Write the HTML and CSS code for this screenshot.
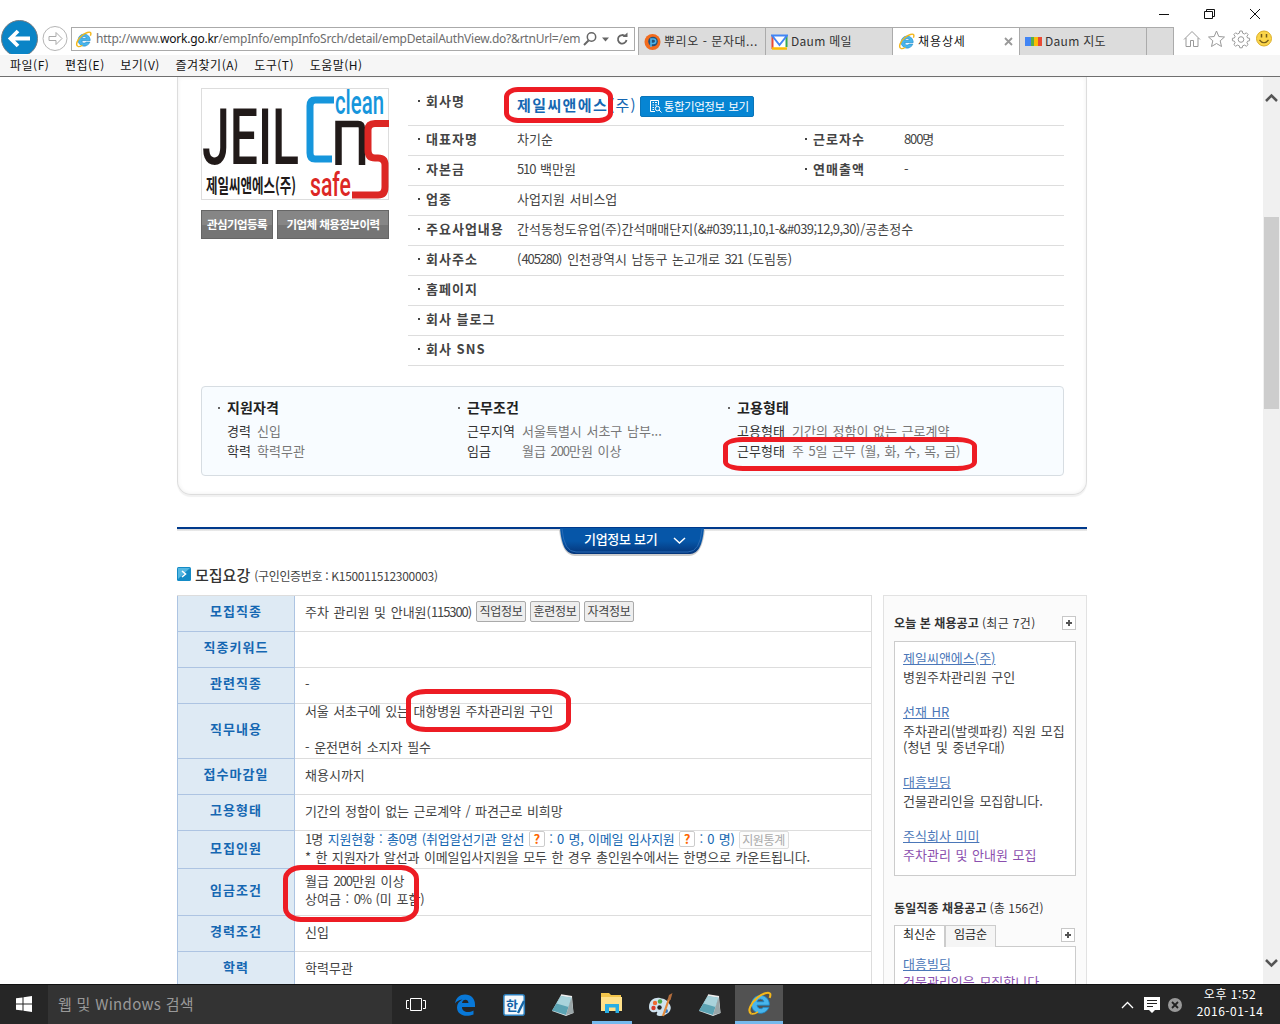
FILE: index.html
```html
<!DOCTYPE html>
<html lang="ko">
<head>
<meta charset="utf-8">
<title>채용상세</title>
<link rel="stylesheet" href="styles.css">
</head>
<body>
<svg class="defs" width="0" height="0" aria-hidden="true">
  <defs>
    <symbol id="ie" viewBox="0 0 24 24">
      <path d="M21 15.700A8.600 8.600 0 1 1 21.400 11.600V13.600H9.600A3.500 3.500 0 0 0 15.800 15.700ZM9.600 10.300H16.200A3.400 3.400 0 0 0 9.600 10.300Z" fill="#48b5ec" stroke="#1b86c6" stroke-width=".8" fill-rule="evenodd"/>
      <path d="M4.200 21.800C-.2 19.600 4 11 10 6.300 15 2.300 21 .3 22.200 2.600 22.700 3.600 22.400 5 21.700 6.600" fill="none" stroke="#f3b71b" stroke-width="2"/>
      <path d="M4.200 21.800C6 22.500 8.500 21.300 10.500 20" fill="none" stroke="#f3b71b" stroke-width="1.600"/>
    </symbol>
    <symbol id="notepad" viewBox="0 0 24 24">
      <path d="M10 2L21 3.500 22.500 20 15 23 1 18Z" fill="#dfe5e6"/>
      <path d="M10 3L20.500 4.500 15 22 1 17.500Z" fill="#5ba3b3"/>
      <path d="M10 3L20.500 4.500 17.500 14 5.500 10.500Z" fill="#a9d3db"/>
      <path d="M20.500 4.500L22.500 20 15 22Z" fill="#9aa6a8"/>
      <path d="M10 2L21 3.800" stroke="#eee" stroke-width="1.500"/>
    </symbol>
  </defs>
</svg>

<header class="chrome">
  <div class="titlebar">
    <svg width="110" height="12" viewBox="0 0 110 12" fill="none" stroke="#111"><path d="M5 6.500H15"/><path d="M50.500 3.500H58.500V10.500H50.500ZM52.500 3.500V1.500H60.500V8.500H58.500"/><path d="M96 1L106 11M106 1L96 11"/></svg>
  </div>
  <div class="navrow">
    <svg class="back" width="72" height="34" viewBox="0 0 72 34"><circle cx="19.500" cy="18.500" r="18" fill="#0a84c6" stroke="#737d84"/><path d="M30 18.500H11M18 11L10.500 18.500 18 26" fill="none" stroke="#fff" stroke-width="3.800"/><circle cx="55" cy="18.500" r="12" fill="#fff" stroke="#b5b5b5"/><path d="M49 16.500H56V12.500L62 18.500 56 24.500V20.500H49Z" fill="none" stroke="#aaa"/></svg>
    <div class="address">
      <svg width="17" height="17"><use href="#ie"/></svg>
      <span class="url">http://www.<b>work.go.kr</b>/empInfo/empInfoSrch/detail/empDetailAuthView.do?&amp;rtnUrl=/em</span>
      <svg class="addr-icons" width="48" height="18" viewBox="0 0 48 18" fill="none" stroke="#666"><circle cx="8.500" cy="7" r="4.200" stroke-width="1.500"/><path d="M5.500 10.500L1 15" stroke-width="2"/><path d="M19 7.500H26L22.500 11.500Z" fill="#666" stroke="none"/><path d="M42.500 6.500A4.300 4.300 0 1 0 43.500 10" stroke-width="1.800"/><path d="M39.500 7H44.500V2.500Z" fill="#666" stroke="none"/></svg>
    </div>
    <nav class="tabs">
      <div class="tab"><svg width="17" height="18" viewBox="0 0 17 18"><circle cx="8.500" cy="9" r="8" fill="#f26b1d"/><circle cx="9" cy="8.500" r="4.800" fill="#21527c"/><path d="M7 14V6H9.500A2 2 0 0 1 9.500 10.500H7" fill="none" stroke="#4fb4e8" stroke-width="1.600"/></svg><span class="t1">뿌리오 - 문자대...</span></div>
      <div class="tab"><svg width="17" height="16" viewBox="0 0 17 16"><path d="M1 1H16V15H1Z" fill="#fff"/><path d="M1.500 1V15" stroke="#e94a35" stroke-width="2"/><path d="M1 14.500H16" stroke="#fbbc05" stroke-width="2.500"/><path d="M15.500 1V13" stroke="#34a853" stroke-width="2"/><path d="M1 1.500H16L8.500 11Z" fill="#fff" stroke="#4285f4" stroke-width="2"/></svg><span class="t2">Daum 메일</span></div>
      <div class="tab active"><svg width="17" height="17"><use href="#ie"/></svg><span class="t3">채용상세</span><svg class="x" width="9" height="9" viewBox="0 0 9 9"><path d="M1 1L8 8M8 1L1 8" stroke="#999" stroke-width="1.800"/></svg></div>
      <div class="tab"><svg width="17" height="9" viewBox="0 0 17 9"><path d="M0 0H6V9H0Z" fill="#4285f4"/><path d="M6 0H9V9H6Z" fill="#5aaf46"/><path d="M9 0H13V9H9Z" fill="#fbbc05"/><path d="M13 0H17V9H13Z" fill="#e94a35"/></svg><span class="t2">Daum 지도</span></div>
      <div class="tab new"></div>
    </nav>
    <svg class="tools" width="92" height="20" viewBox="0 0 92 20" fill="none" stroke="#999"><path d="M2 10.500L10 2.500 18 10.500M4 9V17.500H8.500V11.500H11.500V17.500H16V9"/><path d="M34.500 2L36.800 7.500 42.500 8 38.200 11.800 39.500 17.500 34.500 14.500 29.500 17.500 30.800 11.800 26.500 8 32.200 7.500Z"/><path d="M57.800 2H60.200L60.700 4.200 62.500 5 64.400 3.800 66.100 5.500 64.900 7.400 65.600 9 67.600 9.300V11.700L65.600 12.200 64.900 13.700 66.100 15.600 64.400 17.200 62.500 16.100 60.700 16.800 60.200 18.800H57.800L57.300 16.800 55.500 16.100 53.600 17.200 51.900 15.600 53.100 13.700 52.400 12.200 50.400 11.700V9.300L52.400 9 53.100 7.400 51.900 5.500 53.600 3.800 55.500 5 57.300 4.200Z"/><circle cx="59" cy="10.500" r="2.800"/><circle cx="82" cy="9.500" r="7.500" fill="#fbd54a" stroke="#dcae28"/><path d="M79.500 5V8.500M84.500 5V8.500" stroke="#735a18" stroke-width="1.500"/><path d="M77.500 11Q82 16.500 86.500 11" stroke="#735a18" stroke-width="1.200"/></svg>
  </div>
  <nav class="menu"><span>파일(F)</span><span>편집(E)</span><span>보기(V)</span><span>즐겨찾기(A)</span><span>도구(T)</span><span>도움말(H)</span></nav>
</header>

<main class="viewport">
  <div class="page">
    <section class="card">
      <div class="company">
        <div class="brand">
          <svg class="logo" width="188" height="112" viewBox="0 0 188 112">
            <rect x=".5" y=".5" width="187" height="111" fill="#fff" stroke="#ddd"/>
            <text x="1" y="76" textLength="97" lengthAdjust="spacingAndGlyphs" class="l-jeil">JEIL</text>
            <text x="5" y="105" textLength="90" lengthAdjust="spacingAndGlyphs" class="l-kr">제일씨앤에스(주)</text>
            <path d="M133 12H114Q109 12 109 18V65Q109 71 114 71H131" fill="none" stroke="#1696dc" stroke-width="7"/>
            <path d="M137.500 77V36H157Q161 36 161 41V77" fill="none" stroke="#211a19" stroke-width="6.500"/>
            <path d="M188 35.500H174Q167 35.500 167 42V62Q167 70 174 70H177Q184 70 184 77V99Q184 107 177 107H151" fill="none" stroke="#dc2724" stroke-width="7"/>
            <text x="134" y="26" textLength="49" lengthAdjust="spacingAndGlyphs" class="l-en" fill="#1696dc">clean</text>
            <text x="109" y="108" textLength="41" lengthAdjust="spacingAndGlyphs" class="l-en" fill="#dc2724">safe</text>
          </svg>
          <div class="brand-btns"><a class="b1">관심기업등록</a><a class="b2">기업체 채용정보이력</a></div>
        </div>
        <dl class="info">
          <div class="first"><dt>회사명</dt><dd><strong>제일씨앤에스</strong><span class="ju">(주)</span><a class="bluebtn"><svg width="13" height="13" viewBox="0 0 13 13" fill="none" stroke="#fff"><path d="M6 11.500H1.500V.5H9.500V5M3.500 2.500H5M6 2.500H8M3.500 5H5M6 5H8M3.500 7.500H5M3.500 9.500H5"/><circle cx="8.500" cy="8.500" r="2.200"/><path d="M10 10L12.500 12.500"/></svg><span>통합기업정보 보기</span></a></dd></div>
          <div><dt>대표자명</dt><dd>차기순</dd><dt>근로자수</dt><dd class="side n">800명</dd></div>
          <div><dt>자본금</dt><dd><i class="n">510</i> 백만원</dd><dt>연매출액</dt><dd class="side">-</dd></div>
          <div><dt>업종</dt><dd>사업지원 서비스업</dd></div>
          <div><dt>주요사업내용</dt><dd>간석동청도유업(주)간석매매단지(<i class="codes">&amp;#039;11,10,1-&amp;#039;12,9,30</i>)/공촌정수</dd></div>
          <div><dt>회사주소</dt><dd>(<i class="n">405280</i>) 인천광역시 남동구 논고개로 <i class="n">321</i> (도림동)</dd></div>
          <div><dt>홈페이지</dt><dd></dd></div>
          <div><dt>회사 블로그</dt><dd></dd></div>
          <div><dt>회사 SNS</dt><dd></dd></div>
        </dl>
      </div>
      <div class="summary">
        <div class="s1"><h3>지원자격</h3><p><b>경력</b><span>신입</span></p><p><b>학력</b><span>학력무관</span></p></div>
        <div class="s2"><h3>근무조건</h3><p><b>근무지역</b><span>서울특별시 서초구 남부...</span></p><p><b>임금</b><span>월급 <i class="n">200</i>만원 이상</span></p></div>
        <div class="s3"><h3>고용형태</h3><p><b>고용형태</b><span>기간의 정함이 없는 근로계약</span></p><p><b>근무형태</b><span class="days">주 5일 근무 (월, 화, 수, 목, 금)</span></p></div>
      </div>
    </section>

    <div class="divider"><a><svg class="shape" width="146" height="30" viewBox="0 0 146 30"><defs><linearGradient id="g" x2="0" y2="1"><stop offset=".5" stop-color="#0656a8"/><stop offset="1" stop-color="#053579"/></linearGradient></defs><path d="M0 2H146Q143 28 130 28H16Q3 28 0 2Z" fill="#ccc"/><path d="M1 0H145Q143 26 131 26H15Q3 26 1 0Z" fill="url(#g)"/><path d="M3 1Q5 24 17 24H129Q141 24 143 1" fill="none" stroke="#2a6bb5"/><path d="M115 10L120.500 15 126 10" fill="none" stroke="#fff" stroke-width="1.500"/></svg><span>기업정보 보기</span></a></div>

    <h2><svg width="14" height="14" viewBox="0 0 14 14"><rect width="14" height="14" rx="1.500" fill="#148bc6"/><path d="M1 1H13L1 12Z" fill="#54b7e2"/><path d="M5 4L8.500 7 5 10" fill="none" stroke="#fff" stroke-width="1.600"/></svg><b>모집요강</b><span>(구인인증번호 : K150011512300003)</span></h2>

    <div class="columns">
      <dl class="detail">
        <div class="h36"><dt>모집직종</dt><dd><p>주차 관리원 및 안내원(<i class="n">115300</i>)<a class="mini">직업정보</a><a class="mini">훈련정보</a><a class="mini">자격정보</a></p></dd></div>
        <div class="h36"><dt>직종키워드</dt><dd></dd></div>
        <div class="h36"><dt>관련직종</dt><dd><p>-</p></dd></div>
        <div class="h55"><dt>직무내용</dt><dd><p class="duty">서울 서초구에 있는 대항병원 주차관리원 구인</p><p>&nbsp;</p><p>- 운전면허 소지자 필수</p></dd></div>
        <div class="h36"><dt>접수마감일</dt><dd><p>채용시까지</p></dd></div>
        <div class="h36"><dt>고용형태</dt><dd><p class="duty">기간의 정함이 없는 근로계약 / 파견근로 비희망</p></dd></div>
        <div class="h38"><dt>모집인원</dt><dd><p class="apply"><i class="n">1</i>명 <em>지원현황 : 총0명 (취업알선기관 알선 <u>?</u> : 0 명, 이메일 입사지원 <u>?</u> : 0 명)</em><a class="mini dim">지원통계</a></p><p class="note">* 한 지원자가 알선과 이메일입사지원을 모두 한 경우 총인원수에서는 한명으로 카운트됩니다.</p></dd></div>
        <div class="h47"><dt>임금조건</dt><dd><p>월급 <i class="n">200</i>만원 이상</p><p>상여금 : <i class="n">0%</i> (미 포함)</p></dd></div>
        <div class="h36"><dt>경력조건</dt><dd><p>신입</p></dd></div>
        <div class="h36"><dt>학력</dt><dd><p>학력무관</p></dd></div>
      </dl>
      <aside>
        <h4><b>오늘 본 채용공고</b><span>(최근 7건)</span><svg class="plus" width="14" height="14" viewBox="0 0 14 14"><rect x=".5" y=".5" width="13" height="13" fill="#fff" stroke="#c8c8c8"/><path d="M4 7H10M7 4V10" stroke="#555" stroke-width="2"/></svg></h4>
        <ul class="recent">
          <li><a>제일씨앤에스(주)</a><p>병원주차관리원 구인</p></li>
          <li><a>선재 HR</a><p>주차관리(발렛파킹) 직원 모집<br>(청년 및 중년우대)</p></li>
          <li><a>대흥빌딩</a><p>건물관리인을 모집합니다.</p></li>
          <li><a>주식회사 미미</a><p class="seen">주차관리 및 안내원 모집</p></li>
        </ul>
        <h4 class="same"><b>동일직종 채용공고</b><span>(총 156건)</span></h4>
        <div class="sort"><span class="on">최신순</span><span>임금순</span><svg class="plus" width="14" height="14" viewBox="0 0 14 14"><rect x=".5" y=".5" width="13" height="13" fill="#fff" stroke="#c8c8c8"/><path d="M4 7H10M7 4V10" stroke="#555" stroke-width="2"/></svg></div>
        <ul class="list2"><li><a>대흥빌딩</a><p class="seen">건물관리인을 모집합니다.</p></li></ul>
      </aside>
    </div>
    <i class="ring r1"></i><i class="ring r2"></i><i class="ring r3"></i><i class="ring r4"></i>
  </div>
  <div class="scrollbar">
    <svg width="17" height="12" viewBox="0 0 17 12"><path d="M3 9L8.500 3.500 14 9" fill="none" stroke="#555" stroke-width="2.500"/></svg>
    <div class="thumb"></div>
    <svg width="17" height="12" viewBox="0 0 17 12"><path d="M3 3L8.500 8.500 14 3" fill="none" stroke="#555" stroke-width="2.500"/></svg>
  </div>
</main>

<footer class="taskbar">
  <div class="start"><svg width="16" height="16" viewBox="0 0 16 16" fill="#fff"><path d="M0 2.300L6.500 1.400V7.500H0ZM7.500 1.200L16 0V7.500H7.500ZM0 8.500H6.500V14.600L0 13.700ZM7.500 8.500H16V16L7.500 14.800Z"/></svg></div>
  <div class="search">웹 및 Windows 검색</div>
  <div class="app"><svg width="20" height="14" viewBox="0 0 20 14" fill="none" stroke="#fff"><path d="M4.500 .5H15.500V12.500H4.500ZM3 2.500H.5V10.500H3M17 2.500H19.500V10.500H17"/></svg></div>
  <div class="app"><svg width="22" height="22" viewBox="0 0 22 22"><path d="M1 9.500C2 3.500 6 .5 11 .5 17 .5 21 4.500 21 10.500V13H8C8 18 14 19.500 19.500 16.500V20.500C11 24 3 20.500 3 13.500 3 10 5 7 8.500 5.500 4.500 6 2.500 7.500 1 9.500ZM8 9H14.500C14.500 4.500 8.500 4.500 8 9Z" fill="#0878d8" fill-rule="evenodd"/></svg></div>
  <div class="app"><svg width="23" height="22" viewBox="0 0 23 22"><rect x=".8" y=".8" width="20.500" height="20.500" rx="2" fill="#f5f9fc" stroke="#2b7dba" stroke-width="1.600"/><text x="3" y="16" class="han">한</text><path d="M21 7L15 19" stroke="#1666a6" stroke-width="2.400"/></svg></div>
  <div class="app"><svg width="24" height="24"><use href="#notepad"/></svg></div>
  <div class="app run"><svg width="22" height="22" viewBox="0 0 22 22"><path d="M0 1H8L10 3H20V19H0Z" fill="#f3c54b"/><path d="M0 5H21V19H0Z" fill="#ffe18a"/><path d="M4 21V12H18V21H14.500V15.500H8V21Z" fill="#28aee4"/></svg></div>
  <div class="app"><svg width="24" height="24" viewBox="0 0 24 24"><path d="M0 14C0 7 6 4 11 5S18 7 21 12 18 23 11 23 11 18 7 19 0 18 0 14Z" fill="#cfe2ee"/><circle cx="4.500" cy="15" r="2.200" fill="#d83b2b"/><circle cx="6" cy="10" r="2.200" fill="#ef6b32"/><circle cx="11" cy="8.500" r="2.200" fill="#4ba84b"/><circle cx="10.500" cy="14.500" r="2.200" fill="#262626"/><circle cx="17" cy="18" r="2" fill="#3478bd"/><path d="M20 6L14 23" stroke="#e2893a" stroke-width="2.200"/><path d="M18.500 7L20 2 23.500 0 21.500 7Z" fill="#b36d3c"/></svg></div>
  <div class="app"><svg width="24" height="24"><use href="#notepad"/></svg></div>
  <div class="app run current"><svg width="25" height="25"><use href="#ie"/></svg></div>
  <div class="tray">
    <svg width="62" height="18" viewBox="0 0 62 18"><path d="M1 12L6.500 6.500 12 12" fill="none" stroke="#fff" stroke-width="1.300"/><path d="M23 1H39V14H34L31 17 28 14H23Z" fill="#fff"/><path d="M26 4.500H36M26 7.500H36M26 10.500H32" stroke="#222"/><circle cx="54" cy="9" r="7" fill="#999"/><path d="M51 6L57 12M57 6L51 12" stroke="#222" stroke-width="1.800"/></svg>
    <div class="clock"><span>오후 1:52</span><span>2016-01-14</span></div>
  </div>
</footer>
</body>
</html>
```
FILE: styles.css
```css
* { box-sizing: border-box; margin: 0; padding: 0; }
body { width: 1280px; height: 1024px; overflow: hidden; display: flex; flex-direction: column; background: #fff; color: #444; font: 13px/18px "Noto Sans CJK KR", sans-serif; white-space: nowrap; }
svg { display: block; flex: none; }
.defs { position: absolute; }
ul { list-style: none; }
i { font-style: normal; }
.n { letter-spacing: -1.1px; }
.codes { letter-spacing: -.58px; }

.chrome { height: 77px; border-bottom: 1px solid #6f6f6f; }
.titlebar { height: 20px; display: flex; justify-content: flex-end; padding: 8px 16px 0 0; }
.navrow { height: 35px; display: flex; overflow: hidden; }
.back { margin-right: -1px; }
.address { width: 564px; height: 24px; margin-top: 7px; border: 1px solid #aaa; display: flex; align-items: center; padding: 0 3px; }
.url { width: 488px; margin-left: 4px; font-family: "Noto Sans", sans-serif; font-size: 12px; letter-spacing: -.23px; color: #6d6d6d; }
.url b { font-weight: 400; color: #111; }
.tabs { display: flex; margin: 7px 0 0 3px; height: 28px; }
.tab { width: 127px; border: 1px solid #ababab; border-width: 1px 0 0 1px; background: #dcdcdc; display: flex; align-items: center; padding-left: 5px; font-size: 12px; color: #333; }
.tab span { margin: -2px 0 0 3px; letter-spacing: .3px; }
.tab .t1 { letter-spacing: .55px; }
.tab .t3 { letter-spacing: .9px; color: #111; }
.tab.active { background: #fff; border-bottom: 0; }
.tab.new { width: 28px; border-right-width: 1px; }
.tab .x { margin: 0 6px 0 auto; }
.tools { margin: 9px 0 0 8px; }
.menu { height: 21px; background: #f6f6f6; display: flex; padding-left: 10px; font-size: 12px; line-height: 20px; color: #111; letter-spacing: .5px; }
.menu span { margin-right: 15.600px; }

.viewport { height: 907px; display: flex; justify-content: space-between; overflow: hidden; }
.page { position: relative; width: 910px; margin-left: 177px; }
.scrollbar { width: 17px; background: #f0f0f0; padding-top: 15px; }
.thumb { height: 192px; margin: 113px 1px 548px; background: #cdcdcd; }

.card { height: 418px; border: 1px solid #ddd; border-top: 0; border-radius: 0 0 14px 14px; box-shadow: 0 2px 1px #f1f1f1, inset 0 0 4px #eee; padding: 0 22px 0 23px; }
.company { display: flex; justify-content: space-between; }
.brand { padding-top: 11px; }
.l-jeil { font: 500 78px/1 Roboto, sans-serif; fill: #211a19; }
.l-kr { font: bold 19px/1 "Noto Sans CJK KR", sans-serif; fill: #211a19; }
.l-en { font: 500 33px/1 Roboto, sans-serif; }
.brand-btns { display: flex; gap: 4px; margin-top: 10px; }
.brand-btns a { height: 29px; border: 1px solid #666; background: linear-gradient(#868686 50%, #757575 50%); color: #fff; font-size: 11.500px; font-weight: 700; line-height: 26px; text-align: center; letter-spacing: -.55px; }
.b1 { width: 72px; }
.b2 { width: 112px; }
.info { width: 656px; }
.info > div { height: 30px; border-bottom: 1px solid #ddd; display: flex; line-height: 26px; }
.info > .first { height: 49px; line-height: 47px; }
.info dt { width: 109px; flex: none; padding-left: 18px; font-weight: 700; letter-spacing: 1px; position: relative; }
.info dt::before { content: ""; position: absolute; left: 10px; top: 12px; width: 2px; height: 2px; background: #444; }
.info .first dt::before { top: 23px; }
.info dd { width: 278px; flex: none; word-spacing: 1px; }
.info dd.side { width: auto; }
.info .first dd { display: flex; align-items: center; padding-top: 8px; width: auto; }
.first strong { font-size: 15px; line-height: 20px; color: #1567b2; letter-spacing: 1.400px; }
.ju { color: #1567b2; font-size: 15px; line-height: 20px; padding-left: 1px; letter-spacing: 1.200px; }
.bluebtn { width: 114px; height: 21px; margin: 2px 0 0 3px; background: #0685d3; border: 1px solid #0a75b9; border-radius: 2px; color: #fff; display: flex; align-items: center; gap: 2px; padding-left: 8px; font-size: 11.500px; line-height: 19px; letter-spacing: -.45px; }

.summary { width: 863px; height: 90px; margin-top: 20px; border: 1px solid #d7dde2; border-radius: 4px; background: #f8fcff; display: flex; padding: 10px 0 0 25px; line-height: 20px; color: #777; }
.summary h3 { font-size: 14px; line-height: 20px; margin-bottom: 4px; color: #222; position: relative; letter-spacing: .1px; }
.summary h3::before { content: ""; position: absolute; left: -9px; top: 10px; width: 2px; height: 2px; background: #666; }
.summary p { display: flex; word-spacing: 1px; }
.summary b { font-weight: 400; color: #333; }
.summary .days { letter-spacing: -.1px; }
.s1 { width: 240px; } .s1 b { width: 30px; }
.s2 { width: 270px; } .s2 b { width: 55px; }
.s3 b { width: 55px; }

.divider { margin-top: 32px; height: 4px; border-top: 2px solid #003a8c; background: linear-gradient(#d5d5d5, #eee); display: flex; justify-content: center; }
.divider a { display: grid; width: 146px; height: 30px; margin-top: -1px; }
.divider a > * { grid-area: 1 / 1; }
.divider span { color: #fff; font-weight: 500; line-height: 22px; padding-left: 25px; letter-spacing: -.3px; }
.page h2 { margin-top: 33px; height: 31px; display: flex; align-items: center; font-weight: 400; font-size: 12px; padding-bottom: 9px; }
h2 svg { margin-bottom: 2px; }
h2 b { font-size: 15px; font-weight: 500; color: #333; margin: 0 4px; }
h2 span { letter-spacing: -.32px; padding-top: 2px; }

.columns { display: flex; justify-content: space-between; }
.detail { width: 695px; border: 1px solid #ddd; border-width: 1px 1px 0 0; }
.detail > div { display: flex; border-bottom: 1px solid #ddd; }
.detail dt { width: 118px; flex: none; background: #deeaf4; border: 1px solid #adc4e2; border-width: 0 1px 1px; color: #1567b2; font-weight: 700; letter-spacing: 1px; display: flex; align-items: center; justify-content: center; margin-bottom: -1px; padding-bottom: 5px; }
.detail dd { padding: 0 0 4px 10px; display: flex; flex-direction: column; justify-content: center; word-spacing: 1px; }
.h36 { height: 36px; } .h55 { height: 55px; } .h38 { height: 38px; } .h47 { height: 47px; }
.detail .h38 dd { padding-bottom: 3px; }
.detail .h38 dt, .detail .h47 dt { padding-bottom: 4px; }
.detail p { height: 18px; }
.duty { letter-spacing: -.1px; }
.mini { display: inline-block; vertical-align: middle; width: 50px; height: 21px; border: 1px solid #aaa; border-radius: 2px; background: #eee; margin: -2px 0 0 4px; text-align: center; font-size: 12px; line-height: 18px; color: #444; letter-spacing: -.3px; }
.mini + .mini { margin-left: 4px; }
.mini.dim { background: #fcfcfc; border-color: #ddd; color: #aaa; line-height: 16px; height: 18px; margin-top: 0; }
.detail em { font-style: normal; color: #1567b2; letter-spacing: -.22px; }
.note { letter-spacing: -.11px; }
.detail u { display: inline-block; width: 16px; height: 16px; border: 1px solid #ccc; border-radius: 2px; background: #fff; color: #f60; font-weight: 700; text-align: center; text-decoration: none; line-height: 14px; }

aside { width: 204px; height: 420px; border: 1px solid #e2e2e2; background: #fbfbfb; padding: 17px 10px 0; }
aside h4 { height: 20px; display: flex; align-items: center; font-size: 12px; font-weight: 400; color: #333; }
aside h4 span { margin-left: 3px; letter-spacing: .35px; }
aside .same span { letter-spacing: .05px; }
aside h4 b { letter-spacing: .1px; }
.plus { margin-left: auto; }
.recent, .list2 { border: 1px solid #ccc; background: #fff; padding: 8px; line-height: 16px; word-spacing: 1px; }
.recent { margin-top: 8px; height: 235px; }
.recent li { margin-bottom: 19px; }
.recent p, .list2 p { margin-top: 3px; }
aside a { display: block; color: #4b77b8; text-decoration: underline; }
aside .seen { color: #8b4fae; }
aside .same { margin-top: 22px; }
.sort { display: flex; height: 22px; margin-top: 7px; border-bottom: 1px solid #ccc; color: #222; font-size: 12px; line-height: 16px; }
.sort span { width: 51px; height: 22px; border: 1px solid #ccc; border-bottom: 0; background: #f5f5f5; text-align: center; }
.sort .on { background: #fff; }
.sort .plus { margin-top: 3px; margin-right: 1px; }
.list2 { border-top: 0; padding-top: 9px; }
.list2 p { margin-top: 2px; }

.ring { position: absolute; border: 5px solid #ed1c24; }
.r1 { left: 327px; top: 10px; width: 109px; height: 36px; border-radius: 14px / 10px; }
.r2 { left: 546px; top: 360px; width: 254px; height: 34px; border-radius: 20px / 9px; }
.r3 { left: 229px; top: 612px; width: 165px; height: 43px; border-radius: 20px / 11px; }
.r4 { left: 106px; top: 788px; width: 136px; height: 57px; border-radius: 18px / 14px; }

.taskbar { height: 40px; background: #262626; border-top: 1px solid #111; display: flex; color: #fff; }
.start { width: 48px; padding: 11px 0 0 16px; }
.search { width: 344px; background: #333; color: #999; font-size: 15px; line-height: 38px; padding-left: 10px; letter-spacing: .3px; }
.app { width: 48px; margin-right: 1px; display: flex; align-items: center; justify-content: center; }
.run { border-bottom: 3px solid #76b9ed; width: 40px; margin: 0 5px 0 4px; }
.run.current { width: 48px; margin: 0; background: #525252; }
.han { font: bold 13px "Noto Sans CJK KR", sans-serif; fill: #1464a8; }
.tray { margin-left: auto; display: flex; align-items: center; padding-right: 16px; }
.clock { width: 68px; margin: -5px 0 0 13px; display: flex; flex-direction: column; align-items: center; font-size: 12px; line-height: 17px; letter-spacing: .5px; }
```
